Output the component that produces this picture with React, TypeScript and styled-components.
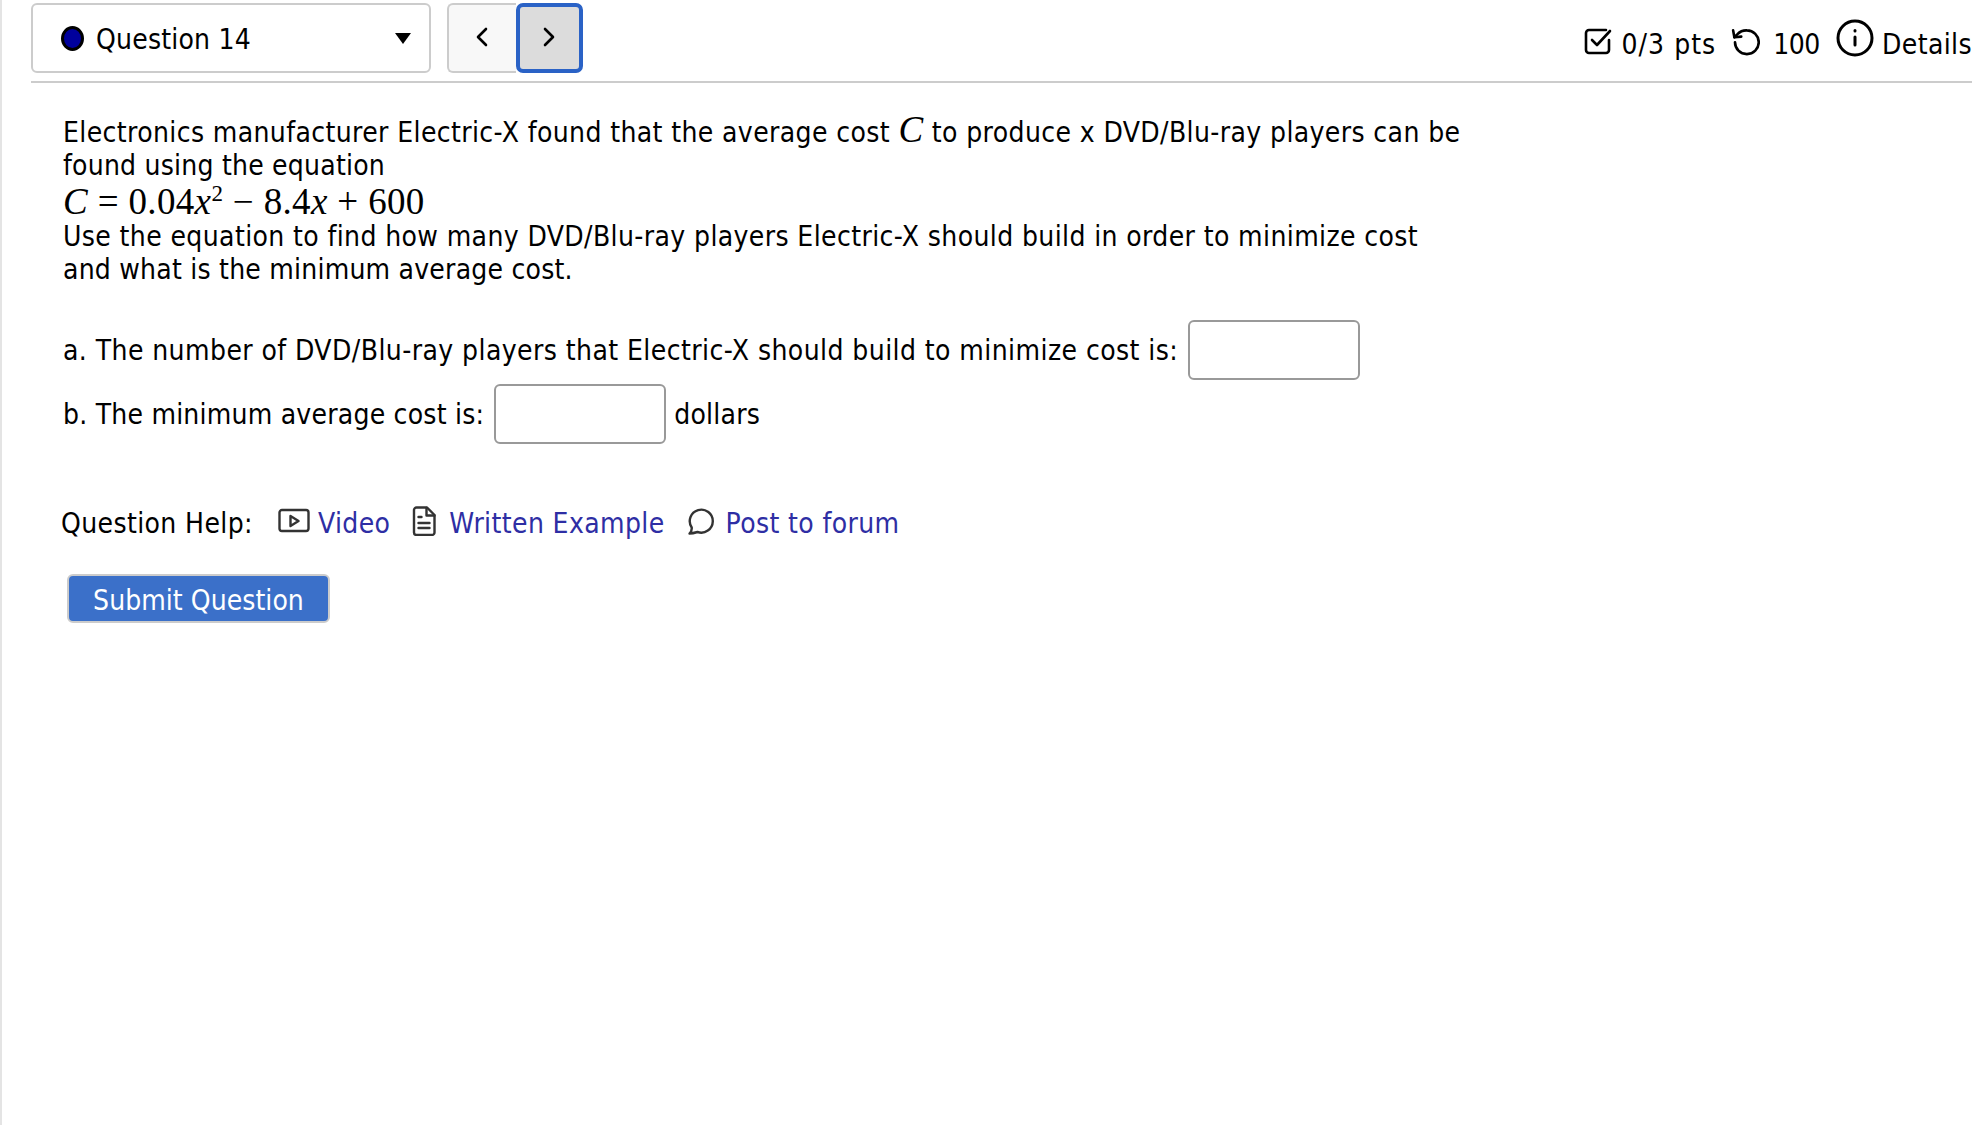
import React from "react";
import styled, { createGlobalStyle } from "styled-components";

const Global = createGlobalStyle`
  html, body { margin: 0; padding: 0; background: #fff; }
  body { font-family: "DejaVu Sans", "Noto Sans", sans-serif; font-stretch: condensed; color: #000; }
`;
const Page = styled.div`
  box-sizing: border-box;
  height: 1125px;
  border-left: 2px solid #e4e4e4;
  padding: 3px 14px 0 29px;
  font-size: 28px;
  letter-spacing: 0.38px;
  overflow: hidden;
`;
const Toolbar = styled.div`
  display: flex;
  align-items: flex-start;
  height: 78px;
  border-bottom: 2px solid #ccc;
`;
const Select = styled.div`
  box-sizing: border-box;
  width: 400px;
  height: 70px;
  border: 2px solid #ccc;
  border-radius: 6px;
  display: flex;
  align-items: center;
  padding: 0 18px 0 28px;
  gap: 12px;
`;
const Dot = styled.span`
  box-sizing: border-box;
  width: 23px;
  height: 25px;
  border-radius: 50%;
  background: #00009c;
  border: 3px solid #000;
`;
const SelectLabel = styled.span`
  letter-spacing: 0.2px;
  padding-top: 2px;
`;
const Caret = styled.span`
  margin-left: auto;
  width: 0;
  height: 0;
  border-left: 8px solid transparent;
  border-right: 8px solid transparent;
  border-top: 11px solid #000;
`;
const Pager = styled.div`
  display: flex;
  margin-left: 16px;
`;
const PageButton = styled.div<{ $focus?: boolean }>`
  box-sizing: border-box;
  height: 70px;
  width: ${(p) => (p.$focus ? "67px" : "69px")};
  display: flex;
  align-items: center;
  justify-content: center;
  padding: 0 2px 2px 0;
  background: ${(p) => (p.$focus ? "#dcdcdc" : "#f8f8f8")};
  border: ${(p) => (p.$focus ? "4px solid #2a62c6" : "2px solid #ccc")};
  border-right: ${(p) => (p.$focus ? "4px solid #2a62c6" : "none")};
  border-radius: ${(p) => (p.$focus ? "7px" : "6px 0 0 6px")};
`;
const Stats = styled.div`
  margin-left: auto;
  display: flex;
  align-items: center;
  height: 78px;
  gap: 8px;
  padding-top: 4px;
  box-sizing: border-box;
`;
const StatText = styled.span<{ $track: string; $gap: number; $lead: number }>`
  letter-spacing: ${(p) => p.$track};
  margin-right: ${(p) => p.$gap}px;
  margin-left: ${(p) => p.$lead}px;
`;
const Question = styled.div`
  padding: 33px 0 0 32px;
  line-height: 33px;
  white-space: nowrap;
`;
const Tight = styled.span`
  letter-spacing: 0.22px;
`;
const MathLine = styled.div`
  font-family: "Liberation Serif", serif;
  font-stretch: normal;
  font-size: 37px;
  letter-spacing: 0.35px;
  line-height: 37px;
  padding-top: 1px;
`;
const Var = styled.i`
  font-family: "Liberation Serif", serif;
  font-stretch: normal;
  font-size: 37px;
  line-height: 0;
`;
const Sup = styled.sup`
  font-size: 23px;
  line-height: 0;
`;
const Parts = styled.div`
  padding: 32px 0 0 32px;
`;
const PartRow = styled.div<{ $track: string }>`
  display: flex;
  align-items: center;
  height: 64px;
  gap: 10px;
  white-space: nowrap;
  letter-spacing: ${(p) => p.$track};
`;
const Box = styled.div`
  box-sizing: border-box;
  width: 172px;
  height: 60px;
  border: 2px solid #999;
  border-radius: 6px;
`;
const Unit = styled.span`
  margin-left: -2px;
`;
const Help = styled.div`
  display: flex;
  align-items: center;
  padding: 57px 0 0 30px;
  height: 40px;
`;
const HelpLabel = styled.span`
  margin-right: 25px;
`;
const HelpLink = styled.a<{ $gap: number }>`
  display: flex;
  align-items: center;
  gap: ${(p) => p.$gap}px;
  color: #2e2ea4;
  margin-right: 21px;
`;
const Submit = styled.div`
  box-sizing: border-box;
  margin: 31px 0 0 36px;
  width: 263px;
  height: 49px;
  padding-top: 3px;
  display: flex;
  align-items: center;
  justify-content: center;
  background: #3b70c9;
  color: #fff;
  letter-spacing: 0.05px;
  border: 2px solid #ccc;
  border-radius: 6px;
`;

const Ico = styled.svg<{ $lift?: number }>`
  display: block;
  fill: none;
  stroke: currentColor;
  stroke-linecap: round;
  stroke-linejoin: round;
  margin-top: ${(p) => -(p.$lift ?? 0)}px;
`;
const DarkIco = styled(Ico)`
  color: #333;
`;

export default function App() {
  return (
    <Page>
      <Global />
      <Toolbar>
        <Select>
          <Dot />
          <SelectLabel>Question 14</SelectLabel>
          <Caret />
        </Select>
        <Pager>
          <PageButton>
            <Ico width="12" height="20" viewBox="0 0 12 20" strokeWidth="2.6"><path d="M10 2 2 10l8 8" /></Ico>
          </PageButton>
          <PageButton $focus>
            <Ico width="12" height="20" viewBox="0 0 12 20" strokeWidth="2.6"><path d="m2 2 8 8-8 8" /></Ico>
          </PageButton>
        </Pager>
        <Stats>
          <Ico $lift={6} width="30" height="30" viewBox="0 0 30 30" strokeWidth="2.6">
            <path d="M26 14v10a3 3 0 0 1-3 3H6a3 3 0 0 1-3-3V7a3 3 0 0 1 3-3h17" />
            <path d="m9 14 5 5 13-14" />
          </Ico>
          <StatText $track="1px" $gap={6} $lead={1}>0/3 pts</StatText>
          <Ico $lift={6} width="30" height="30" viewBox="0 0 24 24" strokeWidth="2.1">
            <path d="M4 13a9.500 9.500 0 1 0 9.500-9.500A9.750 9.750 0 0 0 6 6.500L3.500 9" />
            <path d="M2.500 3.500 3.500 9l5.500-.5" />
          </Ico>
          <StatText $track="-0.4px" $gap={8} $lead={5}>100</StatText>
          <Ico $lift={12} width="38" height="38" viewBox="0 0 38 38" strokeWidth="3">
            <circle cx="19" cy="19" r="17" />
            <path d="M19 18v8M19 11.500v.5" />
          </Ico>
          <span>Details</span>
        </Stats>
      </Toolbar>
      <Question>
        Electronics manufacturer Electric-X found that the average cost <Var>C</Var> to produce x DVD/Blu-ray players can be
        <br />
        <Tight>found using the equation</Tight>
        <MathLine>
          <i>C</i> = 0.04<i>x</i>
          <Sup>2</Sup> − 8.4<i>x</i> + 600
        </MathLine>
        Use the equation to find how many DVD/Blu-ray players Electric-X should build in order to minimize cost
        <br />
        <Tight>and what is the minimum average cost.</Tight>
      </Question>
      <Parts>
        <PartRow $track="0.42px">
          a. The number of DVD/Blu-ray players that Electric-X should build to minimize cost is: <Box />
        </PartRow>
        <PartRow $track="0.22px">
          b. The minimum average cost is: <Box /> <Unit>dollars</Unit>
        </PartRow>
      </Parts>
      <Help>
        <HelpLabel>Question Help:</HelpLabel>
        <HelpLink $gap={8}>
          <DarkIco $lift={5} width="32" height="26" viewBox="0 0 32 26" strokeWidth="2.4">
            <rect x="1.500" y="2" width="29" height="21" rx="2.500" />
            <path d="m12.500 8 8 5-8 5z" />
          </DarkIco>
          Video
        </HelpLink>
        <HelpLink $gap={12}>
          <DarkIco $lift={5} width="26" height="30" viewBox="0 0 26 30" strokeWidth="2.4">
            <path d="M3 4a2.500 2.500 0 0 1 2.500-2.500H16L23.500 9v17.500A2.500 2.500 0 0 1 21 29H5.500A2.500 2.500 0 0 1 3 26.500z" />
            <path d="M15.500 2v7.500h8M7.500 11h3M7.500 17h11M7.500 22h11" />
          </DarkIco>
          Written Example
        </HelpLink>
        <HelpLink $gap={12}>
          <DarkIco $lift={5} width="28" height="28" viewBox="0 0 28 28" strokeWidth="2.4">
            <path d="M3.500 26.500c1.500-1.500 2.500-3.500 2.200-6A11.500 11.500 0 1 1 11.500 25c-2.600.8-5.200 1.500-8 1.500z" />
          </DarkIco>
          Post to forum
        </HelpLink>
      </Help>
      <Submit>Submit Question</Submit>
    </Page>
  );
}
